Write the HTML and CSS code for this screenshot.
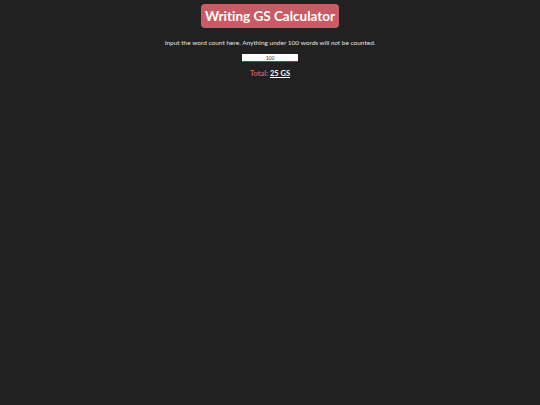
FILE: index.html
```html
<!DOCTYPE html>
<html>
<head>
<meta charset="utf-8">
<link rel="stylesheet" href="styles.css">
</head>
<body>
<main class="page">
  <h1 class="title">Writing GS Calculator</h1>
  <p class="desc">Input the word count here. Anything under 100 words will <em>not</em> be counted.</p>
  <input class="count" type="text" value="100">
  <p class="total"><span class="label">Total:</span> <span class="value">25 GS</span></p>
</main>
</body>
</html>
```
FILE: styles.css
```css
html, body {
  margin: 0;
  padding: 0;
  background: #212121;
  height: 100%;
}
.page {
  display: flex;
  flex-direction: column;
  align-items: center;
  padding-top: 4px;
  font-family: Lato, sans-serif;
  font-variant-ligatures: none;
}
.title {
  margin: 0;
  background: #c95b65;
  color: #ffffff;
  font-size: 13.5px;
  font-weight: 700;
  line-height: 24px;
  height: 24px;
  padding: 0 4px;
  border-radius: 4px;
}
.desc {
  margin: 10px 0 0;
  color: #e0e0e0;
  font-size: 6.5px;
  line-height: 9px;
}
.count {
  margin-top: 7px;
  width: 56px;
  height: 8px;
  box-sizing: border-box;
  border: none;
  border-bottom: 1px solid #8a3a44;
  background: #ffffff;
  padding: 0;
  font-family: Lato, sans-serif;
  font-size: 5px;
  text-align: center;
  color: #333;
  outline: none;
}
.total {
  margin: 7px 0 0;
  font-size: 7.5px;
  font-weight: 700;
  line-height: 10px;
}
.label {
  color: #c95b65;
}
.value {
  color: #ffffff;
  text-decoration: underline;
}
```
